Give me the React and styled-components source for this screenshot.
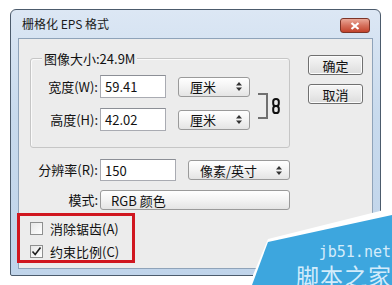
import React from "react";
import styled, { createGlobalStyle } from "styled-components";

const GlobalStyle = createGlobalStyle`
  html, body {
    margin: 0;
    padding: 0;
    background: #fff;
  }
  body {
    width: 392px;
    height: 285px;
    overflow: hidden;
    font-family: "Noto Sans CJK SC", "Open Sans", sans-serif;
    color: #111;
  }
`;

const Page = styled.div`
  position: relative;
  width: 392px;
  height: 285px;
  padding: 9px 0 0 10px;
  box-sizing: border-box;
`;

const Window = styled.div`
  width: 371px;
  height: 267px;
  box-sizing: border-box;
  border: 1px solid #4c5b6c;
  border-radius: 6px 6px 2px 2px;
  background: linear-gradient(#dce7f4, #c8daed 40%, #c0d4ea);
  display: flex;
  flex-direction: column;
  padding: 0 7px 6px 7px;
`;

const TitleBar = styled.div`
  height: 28px;
  display: flex;
  align-items: center;
  justify-content: space-between;
`;

const Title = styled.span`
  margin-left: 4px;
  font-size: 12px;
  line-height: 14px;
  color: #1b1b1b;
`;

const CloseButton = styled.div`
  width: 30px;
  height: 15px;
  margin: 3px 3px 0 0;
  box-sizing: border-box;
  border: 1px solid #7d3427;
  border-radius: 3px;
  background: linear-gradient(#eaa898, #d5705c 50%, #c2432c);
  display: flex;
  align-items: center;
  justify-content: center;
`;

const Content = styled.div`
  flex: 1;
  display: flex;
  background: #ececec;
  border: 1px solid #8fa3b9;
  padding: 16px 0 0 11px;
`;

const LeftCol = styled.div`
  width: 260px;
  display: flex;
  flex-direction: column;
`;

const RightCol = styled.div`
  margin-left: 18px;
  display: flex;
  flex-direction: column;
  gap: 9px;
`;

const GroupBox = styled.div`
  position: relative;
  margin-top: 3px;
  height: 90px;
  box-sizing: border-box;
  border: 1px solid #c6c6c6;
  border-radius: 3px;
  box-shadow: inset 1px 1px 0 #fafafa;
  padding-top: 16px;
`;

const Legend = styled.span`
  position: absolute;
  top: -9px;
  left: 11px;
  padding: 0 2px;
  background: #ececec;
  font-size: 13px;
  line-height: 17px;
`;

const GroupGrid = styled.div`
  display: grid;
  grid-template-columns: 69px 78px 80px auto;
  grid-template-rows: 23px 23px;
  row-gap: 10px;
  align-items: center;
`;

const Label = styled.span`
  width: ${(p) => p.$width || 69}px;
  text-align: right;
  padding-right: 2px;
  box-sizing: border-box;
  font-size: 13px;
  line-height: 16px;
  white-space: nowrap;
`;

const TextInput = styled.div`
  width: ${(p) => p.$width}px;
  height: ${(p) => p.$height || 23}px;
  box-sizing: border-box;
  border: 1px solid #a9abb2;
  border-top-color: #8c8f96;
  background: #fff;
  padding-left: 4px;
  display: flex;
  align-items: center;
  font-size: 13px;
`;

const Select = styled.div`
  width: ${(p) => p.$width}px;
  height: 20px;
  margin-left: ${(p) => p.$gap || 0}px;
  box-sizing: border-box;
  border: 1px solid #9a9a9a;
  border-radius: 3px;
  background: linear-gradient(#ffffff, #f3f3f3 50%, #e4e4e4);
  display: flex;
  align-items: center;
  justify-content: space-between;
  padding: 0 7px 0 ${(p) => p.$pad || 11}px;
  font-size: 13px;
  white-space: nowrap;
`;

const LinkCell = styled.div`
  grid-column: 4;
  grid-row: 1 / 3;
  display: flex;
  align-items: center;
  padding-top: 6px;
`;

const Bracket = styled.div`
  width: 8px;
  height: 22px;
  border: 2px solid #707070;
  border-left: none;
`;

const Row = styled.div`
  display: flex;
  align-items: center;
  margin-top: ${(p) => p.$top}px;
`;

const CheckFrame = styled.div`
  margin: 3px 0 0 -13px;
  width: 118px;
  height: 50px;
  box-sizing: border-box;
  border: 3px solid #d0161f;
  padding: 6px 0 0 10px;
  display: flex;
  flex-direction: column;
  gap: 10px;
`;

const CheckRow = styled.div`
  display: flex;
  align-items: center;
  gap: 7px;
  font-size: 13px;
  line-height: 13px;
`;

const Box = styled.div`
  width: 13px;
  height: 13px;
  box-sizing: border-box;
  border: 1px solid #8e8f8f;
  background: linear-gradient(135deg, #e6e6e6, #ffffff);
  display: flex;
  align-items: center;
  justify-content: center;
`;

const Button = styled.div`
  width: 55px;
  height: 20px;
  box-sizing: border-box;
  border: 1px solid #707070;
  border-radius: 3px;
  background: linear-gradient(#f6f6f6, #eaeaea 50%, #dcdcdc);
  box-shadow: inset 0 0 0 1px #fcfcfc;
  display: flex;
  align-items: center;
  justify-content: center;
  font-size: 13px;
`;

const Watermark = styled.div`
  position: absolute;
  right: 0;
  bottom: 0;
  width: 200px;
  height: 80px;
  overflow: hidden;
`;

const MarkShape = styled.svg`
  position: absolute;
  inset: 0;
`;

const MarkText = styled.div`
  position: absolute;
  right: 0;
  bottom: -2px;
  display: flex;
  flex-direction: column;
  align-items: flex-end;
  gap: 4px;
  color: #d3ecfb;
`;

const MarkSite = styled.span`
  font-family: "DejaVu Sans Mono", monospace;
  font-size: 15px;
  line-height: 13px;
  margin-right: 1px;
`;

const MarkName = styled.span`
  font-family: "Noto Sans CJK SC", sans-serif;
  font-size: 23px;
  line-height: 24px;
  letter-spacing: 1px;
`;

const Arrows = () => (
  <svg width="6" height="9" viewBox="0 0 6 9">
    <path d="M3 0 L6 3.5 H0 Z M3 9 L6 5.5 H0 Z" fill="#333" />
  </svg>
);

const Chain = () => (
  <svg width="8" height="16" viewBox="0 0 8 16" style={{ marginLeft: 4 }}>
    <rect x="1.2" y="1" width="5.6" height="7" rx="2.6" fill="none" stroke="#111" strokeWidth="2" />
    <rect x="1.2" y="8" width="5.6" height="7" rx="2.6" fill="none" stroke="#111" strokeWidth="2" />
  </svg>
);

const Check = () => (
  <svg width="11" height="11" viewBox="0 0 11 11">
    <path d="M1.5 5.5 L4.2 8.5 L9.5 1.5" fill="none" stroke="#1e1e1e" strokeWidth="1.6" />
  </svg>
);

const Checkbox = ({ checked, label }) => (
  <CheckRow>
    <Box>{checked ? <Check /> : null}</Box>
    <span>{label}</span>
  </CheckRow>
);

const App = () => {
  return (
    <Page>
      <GlobalStyle />
      <Window>
        <TitleBar>
          <Title>栅格化 EPS 格式</Title>
          <CloseButton>
            <svg width="10" height="8" viewBox="0 0 10 8">
              <path d="M1.5 1 L8.5 7 M8.5 1 L1.5 7" stroke="#fff" strokeWidth="2.2" />
            </svg>
          </CloseButton>
        </TitleBar>
        <Content>
          <LeftCol>
            <GroupBox>
              <Legend>图像大小:24.9M</Legend>
              <GroupGrid>
                <Label>宽度(W):</Label>
                <TextInput $width={66}>59.41</TextInput>
                <Select $width={72}>
                  <span>厘米</span>
                  <Arrows />
                </Select>
                <LinkCell>
                  <Bracket />
                  <Chain />
                </LinkCell>
                <Label>高度(H):</Label>
                <TextInput $width={66}>42.02</TextInput>
                <Select $width={72}>
                  <span>厘米</span>
                  <Arrows />
                </Select>
              </GroupGrid>
            </GroupBox>
            <Row $top={11}>
              <Label $width={70}>分辨率(R):</Label>
              <TextInput $width={76} $height={22}>150</TextInput>
              <Select $width={102} $gap={12}>
                <span>像素/英寸</span>
                <Arrows />
              </Select>
            </Row>
            <Row $top={9}>
              <Label $width={70}>模式:</Label>
              <Select $width={190} $pad={10}>
                <span>RGB 颜色</span>
              </Select>
            </Row>
            <CheckFrame>
              <Checkbox label="消除锯齿(A)" />
              <Checkbox checked label="约束比例(C)" />
            </CheckFrame>
          </LeftCol>
          <RightCol>
            <Button>确定</Button>
            <Button>取消</Button>
          </RightCol>
        </Content>
      </Window>
      <Watermark>
        <MarkShape width="200" height="80" viewBox="0 0 200 80">
          <polygon points="200,0 188,6 76,34 61,70 61,80 200,80" fill="#fff" />
          <polygon points="200,10 76,37 60,80 200,80" fill="#3da6de" />
        </MarkShape>
        <MarkText>
          <MarkSite>jb51.net</MarkSite>
          <MarkName>脚本之家</MarkName>
        </MarkText>
      </Watermark>
    </Page>
  );
};

export default App;
